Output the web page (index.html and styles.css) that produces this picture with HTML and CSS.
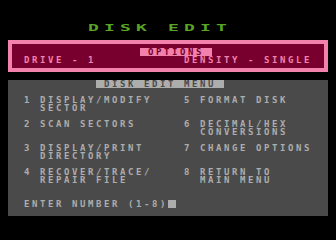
FILE: index.html
```html
<!DOCTYPE html>
<html>
<head>
<meta charset="utf-8">
<link rel="stylesheet" href="styles.css">
</head>
<body>
<div class="screen">
  <div class="title"><span class="wide">DISK EDIT</span></div>
  <div class="options">
    <div class="opt-head"><span class="opt-tag">OPTIONS</span></div>
    <div class="opt-row">
      <span>DRIVE - 1</span>
      <span>DENSITY - SINGLE</span>
    </div>
  </div>
  <div class="panel">
    <div class="menu-head"><span class="inv">DISK EDIT MENU</span></div>
    <div class="menu">
      <div class="item"><span class="num">1</span><span class="txt">DISPLAY/MODIFY<br>SECTOR</span></div>
      <div class="item"><span class="num">5</span><span class="txt">FORMAT DISK</span></div>
      <div class="item"><span class="num">2</span><span class="txt">SCAN SECTORS</span></div>
      <div class="item"><span class="num">6</span><span class="txt">DECIMAL/HEX<br>CONVERSIONS</span></div>
      <div class="item"><span class="num">3</span><span class="txt">DISPLAY/PRINT<br>DIRECTORY</span></div>
      <div class="item"><span class="num">7</span><span class="txt">CHANGE OPTIONS</span></div>
      <div class="item"><span class="num">4</span><span class="txt">RECOVER/TRACE/<br>REPAIR FILE</span></div>
      <div class="item"><span class="num">8</span><span class="txt">RETURN TO<br>MAIN MENU</span></div>
    </div>
    <div class="prompt"><span class="prompt-text">ENTER NUMBER (1-8)</span><span class="cursor"></span></div>
  </div>
</div>
</body>
</html>
```
FILE: styles.css
```css
html, body {
  margin: 0;
  padding: 0;
  background: #000;
}
body {
  width: 336px;
  height: 240px;
  overflow: hidden;
  font-family: "DejaVu Sans Mono", "Liberation Mono", monospace;
  font-weight: bold;
  font-size: 9px;
  line-height: 8px;
  letter-spacing: 2.58px;
  white-space: nowrap;
}
.screen {
  padding: 24px 8px 0 8px;
  width: 320px;
}
.title {
  height: 8px;
  padding-left: 80px;
  margin-bottom: 8px;
  color: #58a424;
}
.wide {
  display: inline-block;
  transform: scaleX(2);
  transform-origin: left center;
}
.options {
  box-sizing: border-box;
  height: 32px;
  border: 4px solid #f282ac;
  background: #78002e;
  padding: 4px 0 4px 12px;
  color: #f282ac;
}
.opt-head {
  height: 8px;
  padding-left: 116px;
}
.opt-tag {
  display: inline-block;
  height: 8px;
  padding: 0 8px;
  background: #f282ac;
  color: #78002e;
  vertical-align: top;
}
.opt-row {
  height: 8px;
  padding-right: 12px;
  display: flex;
  justify-content: space-between;
}
.panel {
  margin-top: 8px;
  height: 136px;
  background: #4a4a4a;
  color: #adadad;
}
.menu-head {
  height: 8px;
  padding-left: 88px;
  margin-bottom: 8px;
}
.inv {
  display: inline-block;
  height: 8px;
  padding: 0 8px;
  background: #adadad;
  color: #4a4a4a;
  vertical-align: top;
}
.menu {
  display: grid;
  grid-template-columns: 160px 1fr;
  grid-auto-rows: 24px;
  padding-left: 16px;
}
.item {
  display: flex;
}
.num {
  width: 16px;
}
.prompt {
  margin-top: 8px;
  padding-left: 16px;
  height: 8px;
  display: flex;
  align-items: flex-start;
}
.cursor {
  width: 8px;
  height: 8px;
  background: #adadad;
}
```
